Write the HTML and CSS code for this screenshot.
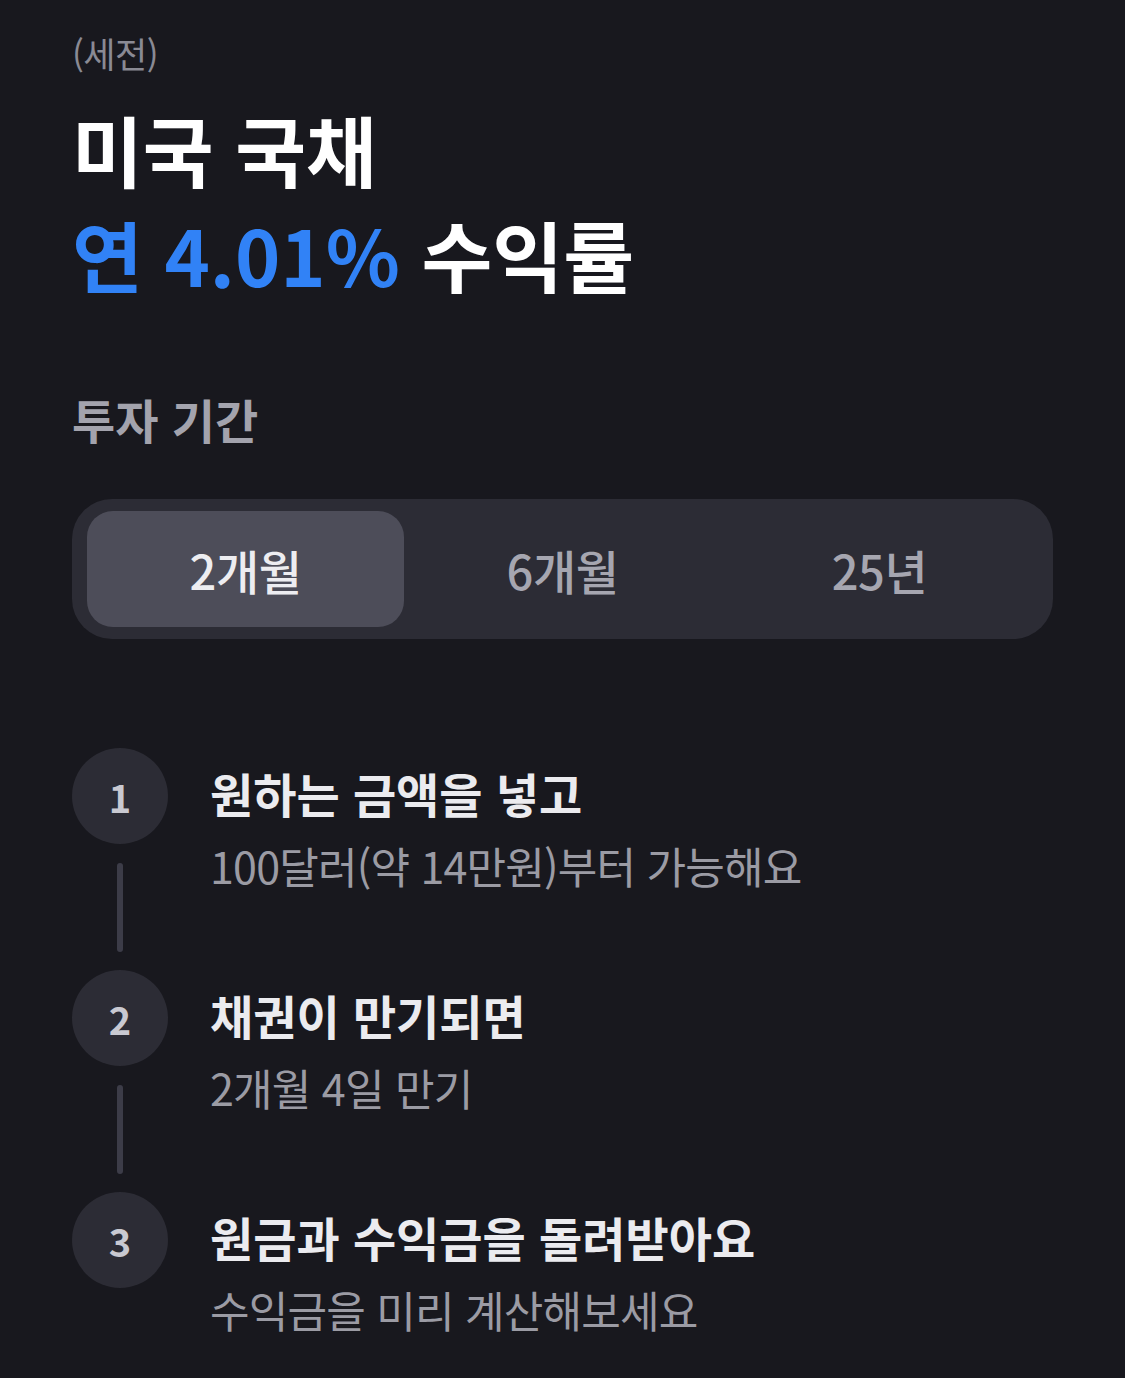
FILE: index.html
```html
<!DOCTYPE html>
<html lang="ko">
<head>
<meta charset="utf-8">
<link rel="stylesheet" href="styles.css">
</head>
<body>
<main class="page">
  <p class="pretax">(세전)</p>
  <h1 class="title">
    <span class="line">미국 국채</span>
    <span class="line"><span class="accent">연 4.01%</span> 수익률</span>
  </h1>

  <h2 class="section">투자 기간</h2>

  <div class="segment">
    <button class="seg-item active">2개월</button>
    <button class="seg-item">6개월</button>
    <button class="seg-item">25년</button>
  </div>

  <ol class="steps">
    <li class="step">
      <div class="rail"><span class="num">1</span><span class="bar"></span></div>
      <div class="body">
        <p class="step-title">원하는 금액을 넣고</p>
        <p class="step-sub">100달러(약 14만원)부터 가능해요</p>
      </div>
    </li>
    <li class="step">
      <div class="rail"><span class="num">2</span><span class="bar"></span></div>
      <div class="body">
        <p class="step-title">채권이 만기되면</p>
        <p class="step-sub">2개월 4일 만기</p>
      </div>
    </li>
    <li class="step">
      <div class="rail"><span class="num">3</span></div>
      <div class="body">
        <p class="step-title">원금과 수익금을 돌려받아요</p>
        <p class="step-sub">수익금을 미리 계산해보세요</p>
      </div>
    </li>
  </ol>
</main>
</body>
</html>
```

FILE: styles.css
```css
* { box-sizing: border-box; }
html, body {
  margin: 0;
  padding: 0;
  background: #18181e;
}
body {
  font-family: "Noto Sans CJK KR", "Noto Sans", sans-serif;
  color: #ffffff;
  width: 1125px;
  height: 1378px;
  overflow: hidden;
}
.page {
  padding: 27px 72px 0 72px;
}
p, h1, h2, ol { margin: 0; padding: 0; }

.pretax {
  font-size: 35px;
  line-height: 52px;
  color: #8a8a94;
  letter-spacing: -0.5px;
}
.title {
  margin-top: 17px;
  font-size: 77px;
  font-weight: 700;
  line-height: 105px;
  letter-spacing: 0;
  display: flex;
  flex-direction: column;
}
.title .line { display: block; }
.accent { color: #3182f6; }

.section {
  margin-top: 81px;
  font-size: 47px;
  font-weight: 700;
  line-height: 64px;
  letter-spacing: 0;
  color: #a3a3ad;
}

.segment {
  margin-top: 48px;
  width: 981px;
  height: 140px;
  background: #2c2c35;
  border-radius: 40px;
  padding: 12px 15px;
  display: grid;
  grid-template-columns: repeat(3, 1fr);
}
.seg-item {
  border: 0;
  background: transparent;
  font-family: inherit;
  font-size: 47px;
  font-weight: 500;
  letter-spacing: -0.5px;
  color: #a6a6b0;
  border-radius: 26px;
  padding: 0;
}
.seg-item.active {
  background: #4d4d59;
  color: #ededf1;
}

.steps {
  list-style: none;
  margin-top: 109px;
  display: flex;
  flex-direction: column;
}
.step {
  display: flex;
  gap: 42px;
  height: 222px;
}
.rail {
  width: 96px;
  display: flex;
  flex-direction: column;
  align-items: center;
}
.num {
  width: 96px;
  height: 96px;
  border-radius: 50%;
  background: #2c2c35;
  color: #c9c9d1;
  font-size: 38px;
  font-weight: 700;
  display: flex;
  align-items: center;
  justify-content: center;
}
.bar {
  margin-top: 19px;
  width: 6px;
  height: 89px;
  border-radius: 3px;
  background: #3c3c48;
}
.body {
  padding-top: 13px;
}
.step-title {
  font-size: 47px;
  font-weight: 700;
  line-height: 64px;
  letter-spacing: 0;
  color: #ebebef;
}
.step-sub {
  margin-top: 10px;
  font-size: 43px;
  line-height: 60px;
  letter-spacing: -0.8px;
  color: #9b9ba4;
}
```
